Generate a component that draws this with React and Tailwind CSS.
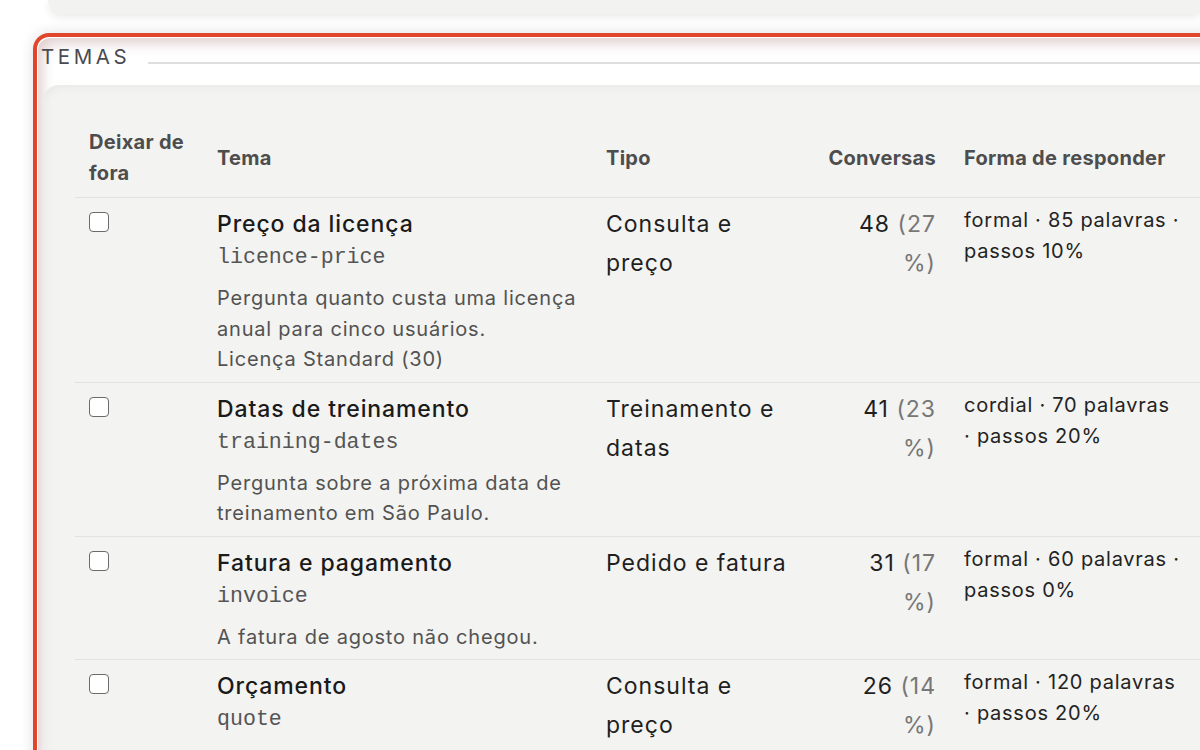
import React from 'react'

const temas = [
  {
    title: 'Preço da licença',
    slug: 'licence-price',
    desc: 'Pergunta quanto custa uma licença anual para cinco usuários.',
    extra: 'Licença Standard (30)',
    tipo: 'Consulta e preço',
    n: 48,
    pct: 27,
    forma: ['formal · 85 palavras ·', 'passos 10%'],
  },
  {
    title: 'Datas de treinamento',
    slug: 'training-dates',
    desc: 'Pergunta sobre a próxima data de treinamento em São Paulo.',
    tipo: 'Treinamento e datas',
    n: 41,
    pct: 23,
    forma: ['cordial · 70 palavras', '· passos 20%'],
  },
  {
    title: 'Fatura e pagamento',
    slug: 'invoice',
    desc: 'A fatura de agosto não chegou.',
    tipo: 'Pedido e fatura',
    n: 31,
    pct: 17,
    forma: ['formal · 60 palavras ·', 'passos 0%'],
  },
  {
    title: 'Orçamento',
    slug: 'quote',
    tipo: 'Consulta e preço',
    n: 26,
    pct: 14,
    forma: ['formal · 120 palavras', '· passos 20%'],
  },
]

function Checkbox() {
  return <span className="mt-[7px] block w-[20px] h-[20px] rounded-[4px] border-[1.5px] border-[#6b6b6b] bg-white" />
}

export default function App() {
  return (
    <div className="w-[1200px] h-[750px] overflow-hidden bg-white font-['Inter','Noto_Sans',sans-serif]">
      <div className="ml-[48px] h-[14px] rounded-bl-[18px] bg-[#f2f2f0] shadow-[0_3px_10px_rgba(0,0,0,0.09)]" />

      <div className="mt-[19px] ml-[33px] w-[1240px] rounded-[16px] border-4 border-[#e0462b] bg-white p-[1px] shadow-[0_0_14px_rgba(0,0,0,0.13)]">
        <div className="rounded-[12px] h-[760px] shadow-[inset_5px_6px_12px_rgba(150,95,95,0.28)]">
          <div className="flex items-center h-[38px] pl-[3px]">
            <span className="text-[20.5px] leading-[24px] tracking-[3.6px] text-[#4a4a50]">TEMAS</span>
            <div className="flex-1 ml-[18px] mt-[11px] h-[2px] bg-[#dedede]" />
          </div>

          <div className="ml-[5px] mt-[9px] rounded-[16px] bg-[#f3f3f1] pl-[32px] pt-[34px] h-[700px] shadow-[inset_3px_3px_8px_rgba(0,0,0,0.04)]">
            <table className="table-fixed border-collapse w-[1180px]">
              <colgroup>
                <col className="w-[128px]" />
                <col className="w-[389px]" />
                <col className="w-[214px]" />
                <col className="w-[144px]" />
                <col className="w-[305px]" />
              </colgroup>
              <thead>
                <tr className="border-b border-[#e2e2df] text-[20px] leading-[31px] tracking-[0.3px] text-[#4d4d4d]">
                  <th className="px-[14px] py-[8px] text-left align-middle font-bold">Deixar de fora</th>
                  <th className="px-[14px] py-[8px] text-left align-middle font-bold">Tema</th>
                  <th className="px-[14px] py-[8px] text-left align-middle font-bold">Tipo</th>
                  <th className="px-[14px] py-[8px] text-right align-middle font-bold whitespace-nowrap">Conversas</th>
                  <th className="px-[14px] py-[8px] text-left align-middle font-bold whitespace-nowrap">Forma de responder</th>
                </tr>
              </thead>
              <tbody>
                {temas.map(t => (
                  <tr key={t.slug} className="border-b border-[#e2e2df] align-top">
                    <td className="px-[14px] pt-[7px] pb-[7px]">
                      <Checkbox />
                    </td>
                    <td className="pl-[14px] pr-[4px] pt-[7px] pb-[7px]">
                      <div className="text-[23px] leading-[39px] tracking-[0.9px] font-medium text-[#1a1a1a]">{t.title}</div>
                      <div className="font-['Liberation_Mono',monospace] text-[21.6px] leading-[27px] text-[#555]">{t.slug}</div>
                      {t.desc && (
                        <div className="mt-[12px] text-[20px] leading-[30.5px] tracking-[0.8px] text-[#525252]">
                          <div>{t.desc}</div>
                          {t.extra && <div>{t.extra}</div>}
                        </div>
                      )}
                    </td>
                    <td className="px-[14px] pt-[7px] pb-[7px] text-[23px] leading-[39px] tracking-[1px] text-[#1f1f1f]">{t.tipo}</td>
                    <td className="px-[14px] pt-[7px] pb-[7px] text-right text-[23px] leading-[39px] tracking-[1px] text-[#1f1f1f]">
                      {t.n} <span className="text-[#777]">({t.pct}<br />%)</span>
                    </td>
                    <td className="px-[14px] pt-[7px] pb-[7px] text-[20px] leading-[31px] tracking-[0.75px] text-[#232323] whitespace-nowrap">
                      {t.forma[0]}<br />{t.forma[1]}
                    </td>
                  </tr>
                ))}
              </tbody>
            </table>
          </div>
        </div>
      </div>
    </div>
  )
}
